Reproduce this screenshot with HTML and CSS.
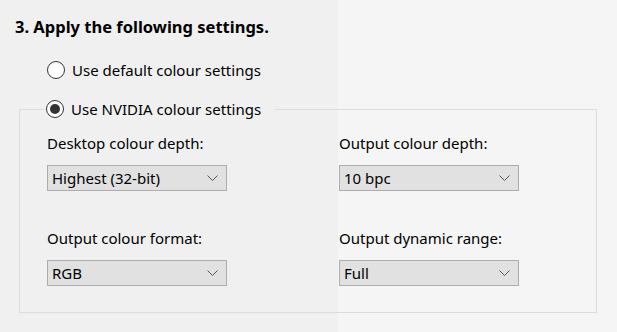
FILE: index.html
```html
<!DOCTYPE html>
<html>
<head>
<meta charset="utf-8">
<link rel="stylesheet" href="styles.css">
</head>
<body>
<div class="page">
  <div class="title">3. Apply the following settings.</div>
  <div class="radio-row">
    <span class="radio"></span>
    <span class="radio-label">Use default colour settings</span>
  </div>
  <fieldset class="group">
    <legend class="legend">
      <span class="radio checked"></span>
      <span class="radio-label">Use NVIDIA colour settings</span>
    </legend>
    <div class="grid">
      <div class="field">
        <div class="label">Desktop colour depth:</div>
        <div class="select"><span>Highest (32-bit)</span><svg class="chev" width="11" height="7" viewBox="0 0 11 7"><path d="M0.5 0.5 L5.5 5.5 L10.5 0.5" fill="none" stroke="#555" stroke-width="1"/></svg></div>
      </div>
      <div class="field">
        <div class="label">Output colour depth:</div>
        <div class="select"><span>10 bpc</span><svg class="chev" width="11" height="7" viewBox="0 0 11 7"><path d="M0.5 0.5 L5.5 5.5 L10.5 0.5" fill="none" stroke="#555" stroke-width="1"/></svg></div>
      </div>
      <div class="field">
        <div class="label">Output colour format:</div>
        <div class="select"><span>RGB</span><svg class="chev" width="11" height="7" viewBox="0 0 11 7"><path d="M0.5 0.5 L5.5 5.5 L10.5 0.5" fill="none" stroke="#555" stroke-width="1"/></svg></div>
      </div>
      <div class="field">
        <div class="label">Output dynamic range:</div>
        <div class="select"><span>Full</span><svg class="chev" width="11" height="7" viewBox="0 0 11 7"><path d="M0.5 0.5 L5.5 5.5 L10.5 0.5" fill="none" stroke="#555" stroke-width="1"/></svg></div>
      </div>
    </div>
  </fieldset>
</div>
</body>
</html>
```
FILE: styles.css
```css
html, body {
  margin: 0;
  padding: 0;
}
body {
  width: 617px;
  height: 332px;
  overflow: hidden;
  background: linear-gradient(to right, #f0f0f0 0, #f0f0f0 338px, #f5f5f5 338px, #f5f5f5 100%);
  font-family: "Noto Sans", "Liberation Sans", sans-serif;
  font-size: 15px;
  color: #000;
}
.page {
  padding: 17px 0 0 15px;
}
.title {
  font-weight: bold;
  font-size: 16.5px;
  line-height: 20px;
  height: 20px;
}
.radio-row {
  display: flex;
  align-items: center;
  margin-top: 23px;
  margin-left: 32px;
  height: 20px;
  line-height: 20px;
}
.radio {
  box-sizing: border-box;
  width: 18px;
  height: 18px;
  border: 1px solid #333;
  border-radius: 50%;
  background: #fff;
  display: inline-flex;
  align-items: center;
  justify-content: center;
  flex: none;
}
.radio.checked::after {
  content: "";
  width: 10px;
  height: 10px;
  border-radius: 50%;
  background: #333;
}
.radio-label {
  margin-left: 7px;
}
.group {
  margin: 19px 0 0 4px;
  width: 578px;
  height: 214px;
  box-sizing: border-box;
  border: 1px solid #dcdcdc;
  padding: 14px 0 0 27px;
}
.legend {
  display: flex;
  align-items: center;
  height: 20px;
  line-height: 20px;
  padding: 0 14px 0 1px;
  margin-left: -2px;
}
.grid {
  display: grid;
  grid-template-columns: 292px 180px;
  row-gap: 37px;
}
.label {
  line-height: 20px;
  height: 20px;
  margin-bottom: 12px;
}
.select {
  box-sizing: border-box;
  width: 180px;
  height: 26px;
  border: 1px solid #adadad;
  background: #e1e1e1;
  display: flex;
  align-items: center;
  justify-content: space-between;
  padding: 0 8px 0 4px;
  line-height: 20px;
}
.chev {
  display: block;
}
```
